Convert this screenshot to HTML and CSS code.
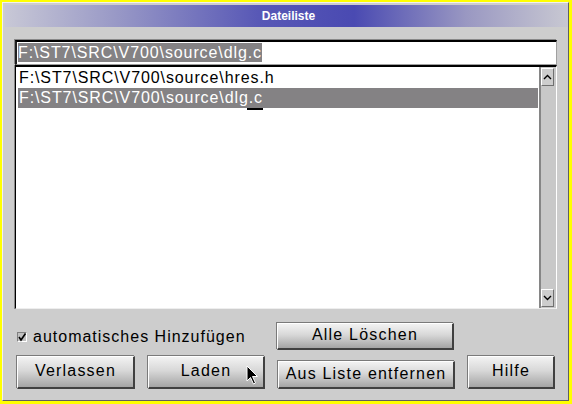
FILE: index.html
```html
<!DOCTYPE html>
<html>
<head>
<meta charset="utf-8">
<link rel="stylesheet" href="styles.css">
</head>
<body>
<div class="window">
  <div class="titlebar"><span class="title">Dateiliste</span></div>
  <div class="content">
    <div class="input"><span class="sel">F:\ST7\SRC\V700\source\dlg.c</span></div>
    <div class="listbox">
      <div class="items">
        <div class="item">F:\ST7\SRC\V700\source\hres.h</div>
        <div class="item selected"><span class="itext">F:\ST7\SRC\V700\source\dlg.c<span class="caret"></span></span></div>
      </div>
      <div class="scrollbar">
        <div class="sbtn"><svg width="9" height="6" viewBox="0 0 9 6"><path d="M1 5 L4.5 1.5 L8 5" fill="none" stroke="#000" stroke-width="1.4"/></svg></div>
        <div class="track"></div>
        <div class="sbtn"><svg width="9" height="6" viewBox="0 0 9 6"><path d="M1 1 L4.5 4.5 L8 1" fill="none" stroke="#000" stroke-width="1.4"/></svg></div>
      </div>
    </div>
    <div class="row1">
      <label class="check"><span class="box"><svg width="10" height="10" viewBox="0 0 10 10"><path d="M2 5 L4 8 L8.5 1.5" fill="none" stroke="#000" stroke-width="1.6"/></svg></span>automatisches Hinzufügen</label>
      <div class="btn wide short">Alle Löschen</div>
    </div>
    <div class="row2">
      <div class="btn b-verlassen">Verlassen</div>
      <div class="btn b-laden">Laden
        <svg class="cursor" width="13" height="21" viewBox="0 0 13 21"><path d="M1 1 L1 16 L4.5 12.5 L7.5 19 L9.5 18 L6.5 11.5 L11.5 11.5 Z" fill="#000" stroke="#fff" stroke-width="1"/></svg>
      </div>
      <div class="btn wide short2">Aus Liste entfernen</div>
      <div class="btn b-hilfe">Hilfe</div>
    </div>
  </div>
</div>
</body>
</html>
```
FILE: styles.css
```css
html, body {
  margin: 0;
  padding: 0;
  background: #ffff00;
  width: 572px;
  height: 404px;
  overflow: hidden;
  font-family: "Liberation Sans", Arial, sans-serif;
}
.window {
  box-sizing: border-box;
  margin: 2px 3px 3px 2px;
  width: 567px;
  height: 399px;
  background: #cdcdcd;
  border-top: 1px solid #f0f0f0;
  border-left: 1px solid #f0f0f0;
  border-right: 1px solid #606060;
  border-bottom: 1px solid #606060;
  display: flex;
  flex-direction: column;
}
.titlebar {
  margin: 2px 0 0 2px;
  height: 22px;
  background: linear-gradient(to right, #c8c8d6 0%, #9898c6 20%, #5858b6 45%, #4a4ab2 62%, #9a98c2 82%, #c8c8d2 100%);
  display: flex;
  align-items: center;
  justify-content: center;
}
.title {
  color: #fff;
  font-weight: bold;
  font-size: 12px;
  margin-left: 4px;
}
.content {
  padding: 13px 11px 0 12px;
  display: flex;
  flex-direction: column;
}
.input {
  box-sizing: border-box;
  height: 25px;
  background: #fff;
  border-top: 2px solid #000;
  border-left: 2px solid #202020;
  border-right: 1px solid #a0a0a0;
  border-bottom: 1px solid #a0a0a0;
  box-shadow: -1px -1px 0 #888;
  padding: 1px 0 0 1px;
  font-size: 16px;
  letter-spacing: 0.9px;
  line-height: 19px;
}
.sel {
  background: #848284;
  color: #fff;
  display: inline-block;
}
.listbox {
  box-sizing: border-box;
  height: 244px;
  display: flex;
  background: #fff;
  border-top: 2px solid #000;
  border-left: 1px solid #000;
  border-right: 1px solid #fff;
  border-bottom: 1px solid #eee;
  box-shadow: -1px 0 0 #888;
}
.items {
  flex: 1;
  padding: 1px 1px 0 2px;
  font-size: 16px;
  letter-spacing: 0.9px;
}
.item {
  height: 20px;
  line-height: 20px;
  padding-left: 1px;
}
.item.selected {
  background: #848284;
  color: #fff;
}
.itext { position: relative; }
.caret {
  position: absolute;
  right: 0;
  top: 19px;
  width: 16px;
  height: 2px;
  background: #000;
}
.scrollbar {
  width: 14px;
  background: #c8c8c8;
  border-left: 2px solid #868686;
  display: flex;
  flex-direction: column;
  padding: 1px 1px 1px 0;
}
.sbtn {
  box-sizing: border-box;
  width: 13px;
  height: 18px;
  background: #cdcdcd;
  border-top: 1px solid #fff;
  border-left: 1px solid #fff;
  border-right: 1px solid #707070;
  border-bottom: 1px solid #707070;
  display: flex;
  align-items: center;
  justify-content: center;
}
.track { flex: 1; }
.row1 {
  margin-top: 14px;
  display: flex;
  align-items: center;
  height: 27px;
}
.check {
  display: flex;
  align-items: center;
  font-size: 16px;
  letter-spacing: 1px;
  width: 262px;
  color: #000;
}
.box {
  box-sizing: border-box;
  width: 10px;
  height: 10px;
  margin: 1px 6px 0 2px;
  background: #c0c0c0;
  border-top: 1px solid #808080;
  border-left: 1px solid #808080;
  border-right: 1px solid #fff;
  border-bottom: 1px solid #fff;
  display: flex;
  align-items: center;
  justify-content: center;
  overflow: visible;
}
.box svg { flex: none; }
.row2 {
  margin-top: 6px;
  display: flex;
  align-items: flex-end;
  gap: 13px;
  padding-left: 2px;
}
.btn {
  box-sizing: border-box;
  height: 33px;
  display: flex;
  align-items: center;
  justify-content: center;
  font-size: 16px;
  letter-spacing: 1.2px;
  color: #000;
  background: linear-gradient(to bottom, #f2f2f2 0%, #d8d8d8 45%, #a4a4a4 100%);
  border-top: 1px solid #fff;
  border-left: 1px solid #fff;
  border-right: 2px solid #404040;
  border-bottom: 2px solid #404040;
  box-shadow: -1px -1px 0 #7a7a7a;
  position: relative;
  padding-bottom: 2px;
}
.wide { width: 177px; }
.short { height: 27px; }
.short2 { height: 28px; }
.b-verlassen { width: 118px; }
.b-laden { width: 117px; }
.b-hilfe { width: 87px; }
.cursor {
  position: absolute;
  left: 97px;
  top: 8px;
}
```
